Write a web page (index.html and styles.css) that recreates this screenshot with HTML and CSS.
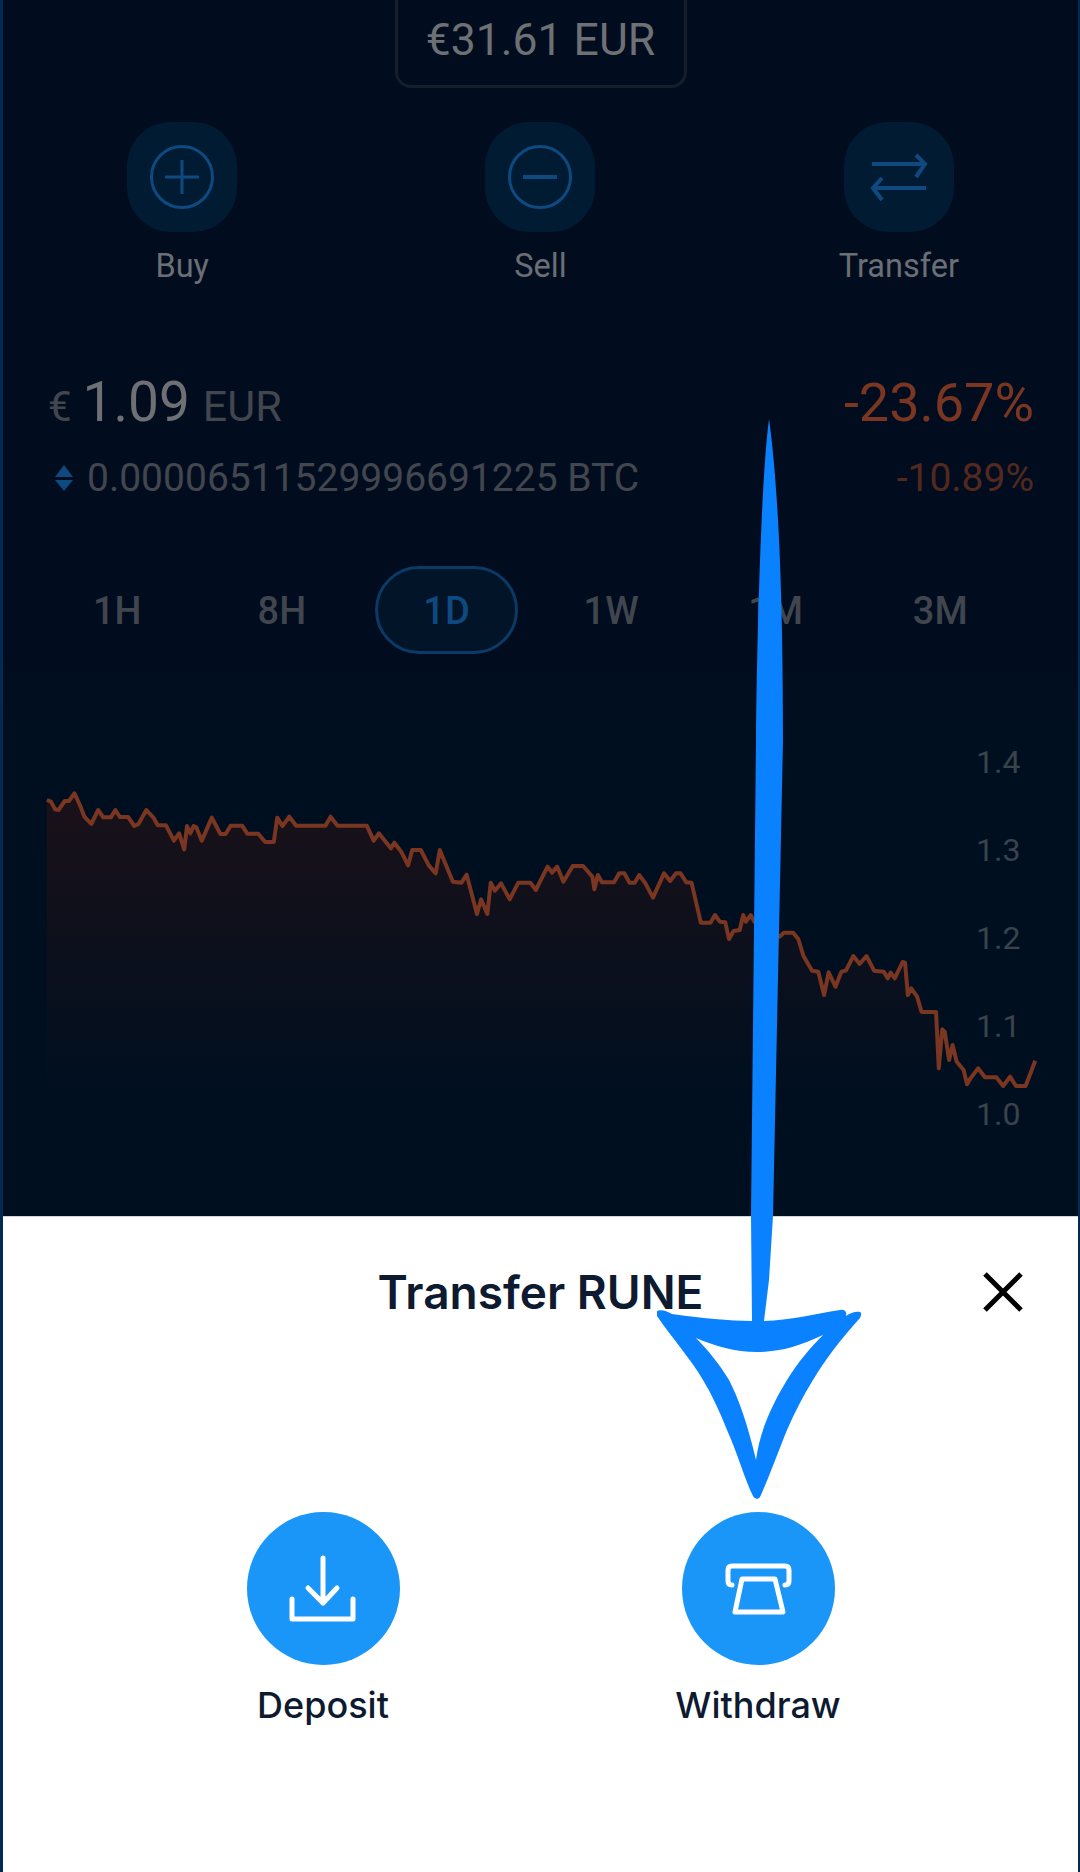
FILE: index.html
```html
<!DOCTYPE html>
<html lang="en">
<head>
  <meta charset="UTF-8" />
  <title>Transfer RUNE</title>
  <link rel="stylesheet" href="styles.css">
</head>
<body>

<div class="screen">

  <div class="balance-wrap">
    <div class="balance">€31.61 EUR</div>
  </div>

  <div class="acciones">
    <div class="accion">
      <div class="accion-icono">
        <svg width="110" height="110" viewBox="0 0 110 110" fill="none" stroke="#0e4a80" stroke-width="3">
          <circle cx="55" cy="55" r="30.5" />
          <path d="M38 55H72M55 38V72" />
        </svg>
      </div>
      <span>Buy</span>
    </div>
    <div class="accion">
      <div class="accion-icono">
        <svg width="110" height="110" viewBox="0 0 110 110" fill="none" stroke="#0e4a80" stroke-width="3">
          <circle cx="55" cy="55" r="30.5" />
          <path d="M38 55H72" stroke-width="4" />
        </svg>
      </div>
      <span>Sell</span>
    </div>
    <div class="accion">
      <div class="accion-icono">
        <svg width="110" height="110" viewBox="0 0 110 110" fill="none" stroke="#0e4a80" stroke-width="4">
          <path d="M28 42H81M72 33L81 42L72 55" />
          <path d="M82 66H29M38 56L29 66L38 78" />
        </svg>
      </div>
      <span>Transfer</span>
    </div>
  </div>

  <div class="precio-fila">
    <div class="precio"><small>€</small><strong>1.09</strong><em>EUR</em></div>
    <div class="cambio">-23.67%</div>
  </div>
  <div class="btc-fila">
    <div class="btc">
      <svg width="18" height="26" viewBox="0 0 18 26" fill="#0e4a80">
        <path d="M9 0L18 12H0Z" />
        <path d="M9 26L18 15H0Z" />
      </svg>
      <span>0.00006511529996691225 BTC</span>
    </div>
    <div class="cambio-btc">-10.89%</div>
  </div>

  <div class="tabs">
    <div class="tab">1H</div>
    <div class="tab">8H</div>
    <div class="tab activo">1D</div>
    <div class="tab">1W</div>
    <div class="tab">1M</div>
    <div class="tab">3M</div>
  </div>

  <div class="grafico">
    <svg class="grafico-svg" viewBox="0 0 3136 1428" preserveAspectRatio="none">
      <defs>
        <linearGradient id="relleno" x1="0" y1="150" x2="0" y2="1060" gradientUnits="userSpaceOnUse">
          <stop offset="0" stop-color="#1a1118" />
          <stop offset="1" stop-color="#000f20" />
        </linearGradient>
      </defs>
      <polygon fill="url(#relleno)" points="136,1060 136,180 148,185 160,208 170,210 188,183 200,183 216,160 232,195 245,230 265,252 285,210 300,232 322,232 335,210 348,231 372,231 390,258 402,252 425,210 445,232 458,256 482,256 505,302 520,280 535,328 543,258 553,280 562,258 570,262 586,302 615,233 640,282 655,282 670,257 703,257 718,281 750,281 770,306 795,306 805,233 820,258 840,230 860,257 945,257 960,230 980,257 1065,257 1085,302 1100,280 1135,325 1145,308 1165,335 1185,376 1197,330 1222,330 1245,376 1265,400 1277,330 1315,425 1340,428 1355,404 1385,522 1397,478 1415,522 1425,428 1437,452 1455,430 1480,478 1505,428 1540,428 1556,450 1590,380 1618,380 1636,425 1663,378 1693,378 1720,410 1726,448 1736,405 1748,427 1783,427 1798,400 1813,400 1828,428 1843,428 1856,405 1873,428 1896,473 1928,400 1946,423 1963,400 1976,400 1993,427 2008,428 2035,548 2063,548 2076,525 2090,545 2106,547 2117,597 2130,573 2148,570 2158,525 2166,545 2180,525 2190,545 2263,590 2276,578 2303,578 2318,597 2333,648 2358,692 2376,695 2393,765 2406,697 2426,740 2443,695 2456,692 2478,648 2496,672 2516,648 2538,692 2566,695 2578,715 2586,698 2598,715 2621,666 2628,668 2636,765 2646,745 2663,770 2676,816 2718,816 2726,985 3006,1060" />
      <polyline class="linea" points="136,180 148,185 160,208 170,210 188,183 200,183 216,160 232,195 245,230 265,252 285,210 300,232 322,232 335,210 348,231 372,231 390,258 402,252 425,210 445,232 458,256 482,256 505,302 520,280 535,328 543,258 553,280 562,258 570,262 586,302 615,233 640,282 655,282 670,257 703,257 718,281 750,281 770,306 795,306 805,233 820,258 840,230 860,257 945,257 960,230 980,257 1065,257 1085,302 1100,280 1135,325 1145,308 1165,335 1185,376 1197,330 1222,330 1245,376 1265,400 1277,330 1315,425 1340,428 1355,404 1385,522 1397,478 1415,522 1425,428 1437,452 1455,430 1480,478 1505,428 1540,428 1556,450 1568,425 1590,380 1603,398 1618,380 1636,425 1663,378 1693,378 1720,410 1726,448 1736,405 1748,427 1783,427 1798,400 1813,400 1828,428 1843,428 1856,405 1873,428 1896,473 1928,400 1946,423 1963,400 1976,400 1993,427 2008,428 2035,548 2063,548 2076,525 2090,545 2106,547 2117,597 2130,573 2148,570 2158,525 2166,545 2180,525 2190,545 2263,590 2276,578 2303,578 2318,597 2333,648 2358,692 2376,695 2393,765 2406,697 2426,740 2443,695 2456,692 2478,648 2496,672 2516,648 2538,692 2566,695 2578,715 2586,698 2598,715 2621,666 2628,668 2636,765 2646,745 2663,770 2676,816 2718,816 2726,985 2736,868 2743,875 2756,960 2766,915 2778,965 2798,990 2808,1033 2818,1015 2840,985 2860,1012 2893,1012 2913,1038 2933,1010 2950,1038 2978,1038 3006,962" />
    </svg>
    <div class="eje">
      <span>1.4</span>
      <span>1.3</span>
      <span>1.2</span>
      <span>1.1</span>
      <span>1.0</span>
    </div>
  </div>

  <div class="hoja">
    <div class="hoja-cabecera">
      <h1>Transfer RUNE</h1>
      <svg class="cerrar" width="40" height="40" viewBox="0 0 40 40" fill="none" stroke="#000" stroke-width="5">
        <path d="M2 2L38 38M38 2L2 38" />
      </svg>
    </div>
    <div class="opciones">
      <div class="opcion">
        <svg width="153" height="153" viewBox="0 0 153 153" fill="none" stroke="#fff" stroke-width="5" stroke-linecap="round" stroke-linejoin="round">
          <circle cx="76.5" cy="76.5" r="76.5" fill="#1996f8" stroke="none" />
          <path d="M76 46V91M61 76L76 91L90 76" />
          <path d="M45 87V107H106V87" />
        </svg>
        <span>Deposit</span>
      </div>
      <div class="opcion">
        <svg width="153" height="153" viewBox="0 0 153 153" fill="none" stroke="#fff" stroke-width="5" stroke-linecap="round" stroke-linejoin="round">
          <circle cx="76.5" cy="76.5" r="76.5" fill="#1996f8" stroke="none" />
          <path d="M50 73Q46 73 46 69V58Q46 54 50 54H103Q107 54 107 58V69Q107 73 103 73" />
          <path d="M60 67H93L101 100H53Z" />
        </svg>
        <span>Withdraw</span>
      </div>
    </div>
  </div>

  <!-- flecha dibujada a mano encima de la captura -->
  <svg class="flecha" width="1080" height="1872" viewBox="0 0 1080 1872" fill="#0a82ff">
    <path d="M769 419C776 470 783 560 783 740L773 1216L769 1280L764 1321H752L751 1216L756 740C757 640 761 480 769 419Z" />
    <path fill-rule="evenodd" d="M657 1311C662 1309 668 1312 672 1314C700 1318 730 1321 752 1321H764C790 1320 815 1314 840 1310C845 1309 847 1312 846 1316C850 1313 856 1311 860 1312C862 1313 861 1316 860 1318C840 1340 825 1360 813 1380C803 1396 795 1412 787 1430C778 1452 768 1480 760 1497C758 1500 755 1499 753 1496C745 1480 737 1452 727 1430C720 1412 712 1395 703 1380C690 1358 672 1338 657 1316ZM696 1338C708 1350 720 1365 729 1380C738 1397 748 1425 756 1460C760 1430 772 1405 787 1380C798 1362 810 1348 823 1335C800 1346 780 1352 757 1352C735 1352 715 1346 696 1338Z" />
  </svg>

</div>

</body>
</html>
```

FILE: styles.css
```css
* {
  box-sizing: border-box;
}
body {
  margin: 0;
  font-family: Roboto, 'Liberation Sans', sans-serif;
  background: #012a55;
}

.screen {
  position: relative;
  width: 1080px;
  height: 1872px;
  overflow: hidden;
  border-left: 3px solid #012a55;
  border-right: 2px solid #012a55;
  background: #010d1e;
  display: flex;
  flex-direction: column;
}

.balance-wrap {
  display: flex;
  justify-content: center;
  flex-shrink: 0;
  margin-top: -20px;
}
.balance {
  width: 292px;
  height: 108px;
  padding-top: 31px;
  border: 3px solid #161e2c;
  border-radius: 16px;
  color: #6e7074;
  font-size: 44.5px;
  line-height: 52px;
  text-align: center;
}

.acciones {
  display: grid;
  grid-template-columns: repeat(3, 1fr);
  margin-top: 34px;
}
.accion {
  display: flex;
  flex-direction: column;
  align-items: center;
  color: #6b6f75;
  font-size: 32.5px;
  line-height: 38px;
}
.accion-icono {
  width: 110px;
  height: 110px;
  margin-bottom: 15px;
  border-radius: 44px;
  background: #011b33;
}
.accion-icono svg {
  display: block;
}

.precio-fila,
.btc-fila {
  display: flex;
  justify-content: space-between;
  align-items: baseline;
  padding: 0 44px 0 45px;
}
.precio-fila {
  margin-top: 87px;
  line-height: 60px;
}
.precio {
  color: #6e7074;
}
.precio small {
  margin-right: 11px;
  color: #42464e;
  font-size: 42px;
}
.precio strong {
  font-size: 55px;
  font-weight: 400;
}
.precio em {
  margin-left: 13px;
  color: #42464e;
  font-size: 43px;
  font-style: normal;
}
.cambio {
  color: #7a3620;
  font-size: 54px;
}
.btc-fila {
  margin-top: 9px;
  line-height: 46px;
}
.btc {
  display: flex;
  align-items: center;
  gap: 14px;
  color: #42464e;
  font-size: 39px;
}
.btc svg {
  margin-left: 7px;
}
.cambio-btc {
  color: #53291f;
  font-size: 39px;
}

.tabs {
  display: grid;
  grid-template-columns: repeat(6, 164.6px);
  margin-top: 65px;
  padding-left: 32px;
  justify-items: center;
}
.tab {
  width: 143px;
  height: 88px;
  border: 3px solid transparent;
  border-radius: 44px;
  color: #40454e;
  font-size: 38px;
  font-weight: 500;
  line-height: 84px;
  text-align: center;
}
.tab.activo {
  border-color: #0b3a66;
  background: #011428;
  color: #0e4a80;
}

.grafico {
  position: relative;
  height: 562px;
  padding-top: 86px;
  background: linear-gradient(#010d1e, #000f20 80px);
  flex-shrink: 0;
}
.grafico-svg {
  display: block;
  width: 1080px;
  height: 476px;
  margin-left: -3px;
}
.linea {
  fill: none;
  stroke: #7a3620;
  stroke-width: 4px;
  stroke-linejoin: round;
  vector-effect: non-scaling-stroke;
}
.eje {
  position: absolute;
  top: 86px;
  left: 973px;
  display: flex;
  flex-direction: column;
  gap: 50px;
  padding-top: 3px;
  color: #3a424c;
  font-size: 32px;
  line-height: 38px;
}

.hoja {
  flex: 1;
  border-top: 1px solid #d0d4dc;
  background: #fff;
  color: #0d1a30;
}
.hoja-cabecera {
  position: relative;
  display: flex;
  justify-content: center;
  padding-top: 46px;
}
.hoja-cabecera h1 {
  margin: 0;
  font-family: Inter, Roboto, sans-serif;
  font-size: 46px;
  font-weight: 600;
  line-height: 58px;
}
.cerrar {
  position: absolute;
  top: 55px;
  right: 55px;
}
.opciones {
  display: grid;
  grid-template-columns: repeat(2, 435px);
  justify-content: center;
  margin-top: 191px;
}
.opcion {
  display: flex;
  flex-direction: column;
  align-items: center;
  gap: 18px;
  font-family: Inter, Roboto, sans-serif;
  font-size: 36px;
  font-weight: 500;
  line-height: 44px;
}
.opcion svg {
  display: block;
}

.flecha {
  position: absolute;
  top: 0;
  left: -3px;
}
```
